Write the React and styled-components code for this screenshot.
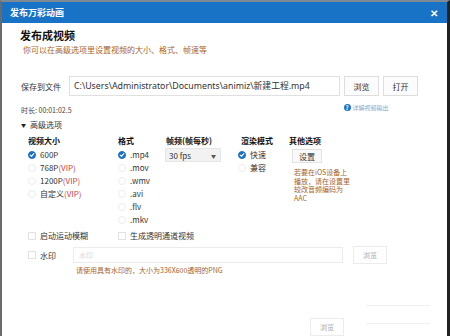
import React from 'react'
import styled, { createGlobalStyle } from 'styled-components'

const GlobalStyle = createGlobalStyle`
  html, body { margin: 0; padding: 0; background: #fff; }
  body {
    font-family: "Noto Sans CJK SC", "Noto Sans", sans-serif;
    color: #333;
  }
`

const Check = () => (
  <svg width="6" height="6" viewBox="0 0 10 10">
    <path d="M2 5.2 L4.2 7.3 L8 2.8" fill="none" stroke="#fff" strokeWidth="1.8" strokeLinecap="round" strokeLinejoin="round" />
  </svg>
)

const Radio = ({ checked, children }) => (
  <RadioRow>
    <Dot $checked={checked}>{checked && <Check />}</Dot>
    <span>{children}</span>
  </RadioRow>
)

const App = () => {
  return (
    <>
      <GlobalStyle />
      <Window>
        <TitleBar>
          <Title>发布万彩动画</Title>
          <Close>✕</Close>
        </TitleBar>
        <Body>
          <Heading>发布成视频</Heading>
          <Hint>你可以在高级选项里设置视频的大小、格式、帧速等</Hint>

          <SaveRow>
            <Label>保存到文件</Label>
            <PathInput>C:\Users\Administrator\Documents\animiz\新建工程.mp4</PathInput>
            <Button>浏览</Button>
            <Button>打开</Button>
          </SaveRow>

          <InfoRow>
            <Small>时长: 00:01:02.5</Small>
            <Help>
              <HelpIcon>?</HelpIcon>
              详解视频输出
            </Help>
          </InfoRow>

          <Toggle><Caret>▼</Caret>高级选项</Toggle>

          <Grid>
            <Col>
              <ColTitle>视频大小</ColTitle>
              <Radio checked>600P</Radio>
              <Radio>768P<Vip>(VIP)</Vip></Radio>
              <Radio>1200P<Vip>(VIP)</Vip></Radio>
              <Radio>自定义<Vip>(VIP)</Vip></Radio>
            </Col>
            <Col>
              <ColTitle>格式</ColTitle>
              <Radio checked>.mp4</Radio>
              <Radio>.mov</Radio>
              <Radio>.wmv</Radio>
              <Radio>.avi</Radio>
              <Radio>.flv</Radio>
              <Radio>.mkv</Radio>
            </Col>
            <Col>
              <ColTitle>帧频(帧每秒)</ColTitle>
              <Select>
                30 fps
                <Arrow>▼</Arrow>
              </Select>
            </Col>
            <Col>
              <ColTitle $indent>渲染模式</ColTitle>
              <Radio checked>快速</Radio>
              <Radio>兼容</Radio>
            </Col>
            <Col>
              <ColTitle>其他选项</ColTitle>
              <SmallButton>设置</SmallButton>
              <Note>
                若要在iOS设备上<br />
                播放，请在设置里<br />
                较改音频编码为<br />
                AAC
              </Note>
            </Col>
          </Grid>

          <CheckRow>
            <CheckItem $width={90}><Box />启动运动模糊</CheckItem>
            <CheckItem><Box />生成透明通道视频</CheckItem>
          </CheckRow>

          <WatermarkRow>
            <CheckItem $width={45}><Box />水印</CheckItem>
            <WmInput>水印</WmInput>
            <GhostButton>浏览</GhostButton>
          </WatermarkRow>
          <WmNote>请使用具有水印的，大小为336X600透明的PNG</WmNote>

          <Footer>
            <GhostButton $footer>浏览</GhostButton>
            <Lines>
              <Line />
              <Line />
            </Lines>
          </Footer>
        </Body>
      </Window>
    </>
  )
}

export default App

const Window = styled.div`
  width: 450px;
  height: 336px;
  box-sizing: border-box;
  border-top: 2px solid #7d8a96;
  border-left: 2px solid #6a6a6a;
  border-right: 3px solid #222;
  background: #fff;
  overflow: hidden;
  display: flex;
  flex-direction: column;
`

const TitleBar = styled.div`
  height: 21px;
  background: #1873c6;
  display: flex;
  align-items: center;
  justify-content: space-between;
  padding: 0 9px 0 8px;
  color: #fff;
`

const Title = styled.div`
  font-size: 9px;
  font-weight: bold;
  font-family: "Noto Sans CJK SC", serif;
`

const Close = styled.div`
  font-size: 10px;
  font-weight: bold;
`

const Body = styled.div`
  flex: 1;
  padding: 5px 0 0 18px;
  display: flex;
  flex-direction: column;
`

const Heading = styled.div`
  font-size: 11px;
  font-weight: bold;
  color: #111;
  line-height: 14px;
  font-family: "Noto Sans CJK SC", serif;
`

const Hint = styled.div`
  font-size: 8px;
  color: #a8642b;
  line-height: 12px;
  margin-top: 2px;
  padding-left: 3px;
`

const SaveRow = styled.div`
  display: flex;
  align-items: center;
  margin-top: 20px;
  height: 20px;
`

const Label = styled.div`
  font-size: 8px;
  width: 48px;
  padding-left: 1px;
`

const PathInput = styled.div`
  width: 271px;
  height: 20px;
  box-sizing: border-box;
  border: 1px solid #e0e0e0;
  font-size: 8.8px;
  font-family: "Noto Sans", "Noto Sans CJK SC", sans-serif;
  color: #333;
  padding-left: 4px;
  line-height: 18px;
  white-space: nowrap;
  overflow: hidden;
`

const Button = styled.div`
  width: 35px;
  height: 20px;
  box-sizing: border-box;
  margin-left: 4px;
  border: 1px solid #dedede;
  background: #fcfcfc;
  font-size: 8px;
  display: flex;
  align-items: center;
  justify-content: center;
  color: #333;
`

const InfoRow = styled.div`
  display: flex;
  align-items: center;
  margin-top: 6px;
  height: 12px;
`

const Small = styled.div`
  font-size: 7px;
  color: #444;
  padding-left: 1px;
  margin-top: 3px;
`

const Help = styled.div`
  margin-left: 272px;
  display: flex;
  align-items: center;
  font-size: 6px;
  color: #8aa5c9;
  margin-top: -2px;
`

const HelpIcon = styled.span`
  width: 7px;
  height: 7px;
  border-radius: 50%;
  background: #1d73c8;
  color: #fff;
  font-size: 6px;
  font-weight: bold;
  display: inline-flex;
  align-items: center;
  justify-content: center;
  margin-right: 2px;
`

const Toggle = styled.div`
  font-size: 8px;
  color: #333;
  margin-top: 5px;
  display: flex;
  align-items: center;
  padding-left: 1px;
`

const Caret = styled.span`
  font-size: 5px;
  margin-right: 4px;
  color: #222;
`

const Grid = styled.div`
  display: grid;
  grid-template-columns: 90px 48px 72px 51px 1fr;
  padding-left: 8px;
  margin-top: 5px;
`

const Col = styled.div`
  display: flex;
  flex-direction: column;
`

const ColTitle = styled.div`
  font-size: 8px;
  font-weight: bold;
  color: #111;
  line-height: 12px;
  margin-bottom: 1px;
  padding-left: ${({ $indent }) => ($indent ? '3px' : '0')};
  font-family: "Noto Sans CJK SC", serif;
`

const RadioRow = styled.div`
  display: flex;
  align-items: center;
  height: 13px;
  font-size: 8px;
  color: #333;
`

const Dot = styled.span`
  width: 8px;
  height: 8px;
  border-radius: 50%;
  box-sizing: border-box;
  margin-right: 4px;
  display: inline-flex;
  align-items: center;
  justify-content: center;
  background: ${({ $checked }) => ($checked ? '#1d6fc4' : '#fff')};
  border: 1px solid ${({ $checked }) => ($checked ? '#1d6fc4' : '#ececec')};
`

const Vip = styled.span`
  color: #d04040;
`

const Select = styled.div`
  width: 56px;
  height: 14px;
  box-sizing: border-box;
  background: #f2f2f2;
  border: 1px solid #e6e6e6;
  font-size: 8px;
  display: flex;
  align-items: center;
  justify-content: space-between;
  padding: 0 4px 0 3px;
  margin-left: -1px;
`

const Arrow = styled.span`
  font-size: 5px;
  color: #555;
`

const SmallButton = styled.div`
  width: 28px;
  height: 12px;
  margin-left: 3px;
  margin-top: 1px;
  border: 1px solid #e2e2e2;
  background: #f9f9f9;
  font-size: 8px;
  display: flex;
  align-items: center;
  justify-content: center;
`

const Note = styled.div`
  margin-top: 5px;
  margin-left: 5px;
  font-size: 7px;
  line-height: 8.7px;
  color: #a8642b;
  white-space: nowrap;
`

const CheckRow = styled.div`
  display: flex;
  align-items: center;
  padding-left: 8px;
  margin-top: 3px;
  height: 13px;
`

const CheckItem = styled.div`
  display: flex;
  align-items: center;
  font-size: 8px;
  color: #333;
  width: ${({ $width }) => ($width ? `${$width}px` : 'auto')};
`

const Box = styled.span`
  width: 8px;
  height: 8px;
  box-sizing: border-box;
  border: 1px solid #e2e2e2;
  margin-right: 4px;
`

const WatermarkRow = styled.div`
  display: flex;
  align-items: center;
  padding-left: 8px;
  margin-top: 4px;
  height: 18px;
`

const WmInput = styled.div`
  width: 270px;
  height: 16px;
  box-sizing: border-box;
  border: 1px solid #ececec;
  font-size: 7px;
  color: #d8d8d8;
  padding-left: 5px;
  display: flex;
  align-items: center;
`

const GhostButton = styled.div`
  width: 34px;
  height: 18px;
  box-sizing: border-box;
  border: 1px solid #ececec;
  font-size: 7px;
  color: #aaa;
  display: flex;
  align-items: center;
  justify-content: center;
  margin-left: ${({ $footer }) => ($footer ? '290px' : '10px')};
  align-self: ${({ $footer }) => ($footer ? 'flex-end' : 'auto')};
`

const WmNote = styled.div`
  font-size: 7px;
  color: #a8642b;
  margin-top: 1px;
  padding-left: 56px;
`

const Footer = styled.div`
  flex: 1;
  display: flex;
  align-items: flex-end;
`

const Lines = styled.div`
  display: flex;
  flex-direction: column;
  gap: 17px;
  margin-left: 22px;
  margin-bottom: 12px;
`

const Line = styled.div`
  width: 64px;
  height: 1px;
  background: #f0f0f0;
`
